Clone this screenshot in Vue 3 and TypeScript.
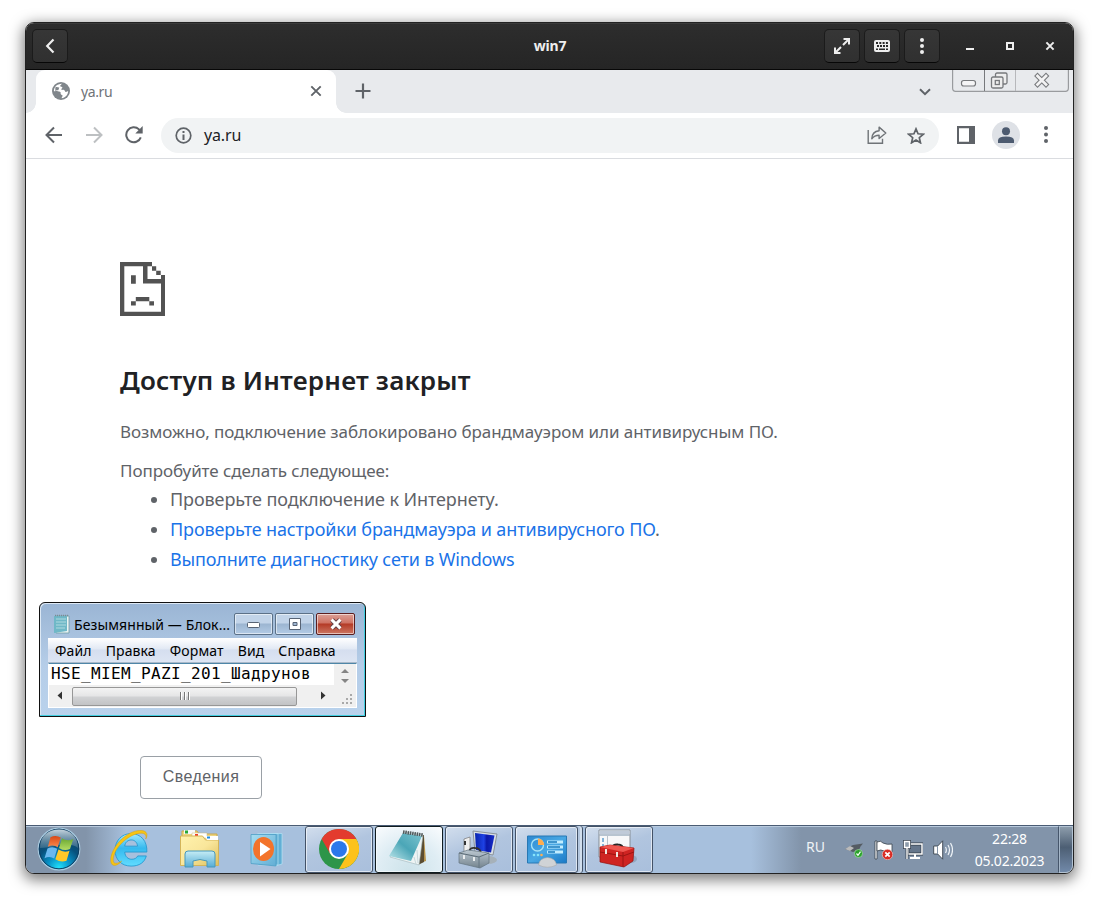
<script setup lang="ts">
interface Hint { text: string; link: boolean; tail: string; cls: string }
const hints: Hint[] = [
  { text: 'Проверьте подключение к Интернету.', link: false, tail: '', cls: 'h1' },
  { text: 'Проверьте настройки брандмауэра и антивирусного ПО', link: true, tail: '.', cls: 'h2' },
  { text: 'Выполните диагностику сети в Windows', link: true, tail: '', cls: 'h3' },
]
const menu: string[] = ['Файл', 'Правка', 'Формат', 'Вид', 'Справка']
</script>

<template>
  <div class="desktop">
    <div class="window">
      <header class="titlebar">
        <button class="gbtn" aria-label="Назад">
          <svg width="16" height="16" viewBox="0 0 16 16"><path d="M11.500 1.500 5.200 8l6.300 6.500" fill="none" stroke="#eee" stroke-width="2.200" /></svg>
        </button>
        <div class="title">win7</div>
        <div class="controls">
          <button class="gbtn"><svg width="16" height="16" viewBox="0 0 16 16"><g fill="none" stroke="#eee" stroke-width="2"><path d="M9.500 1H15v5.500M14.500 1.500 9 7M1 9.500V15h5.500M1.500 14.500 7 9" /></g></svg></button>
          <button class="gbtn"><svg width="16" height="16" viewBox="0 0 16 16"><rect y="2" width="16" height="12" rx="2" fill="#eee" /><path d="M2 5h12" stroke="#292929" stroke-width="2" stroke-dasharray="2 1.300" /><path d="M3 8h11" stroke="#292929" stroke-width="1.800" stroke-dasharray="2 1" /><path d="M2 11.200h2M5 11.200h6M12 11.200h2" stroke="#292929" stroke-width="1.600" /></svg></button>
          <button class="gbtn"><svg width="16" height="16" viewBox="0 0 16 16" fill="#eee"><circle cx="8" cy="2" r="2" /><circle cx="8" cy="8" r="2" /><circle cx="8" cy="14" r="2" /></svg></button>
          <div class="winctl first"><svg width="16" height="16" viewBox="0 0 16 16"><path d="M4 11h8" stroke="#eee" stroke-width="2" /></svg></div>
          <div class="winctl"><svg width="16" height="16" viewBox="0 0 16 16"><path d="M5 5h6v6H5z" fill="none" stroke="#eee" stroke-width="2" /></svg></div>
          <div class="winctl"><svg width="16" height="16" viewBox="0 0 16 16"><path d="m4.400 4.400 7.200 7.200m0-7.200-7.200 7.200" stroke="#eee" stroke-width="2" /></svg></div>
        </div>
      </header>

      <div class="tabstrip">
        <div class="tab">
          <svg width="18" height="18" viewBox="0 0 18 18"><circle cx="9" cy="9" r="9" fill="#80868b" /><path d="M10.200 1.800c-.9.6-2.200 1.600-2 2.500.4.7 2 .4 2.200 1.300.1.900-1.100 1-1.200 1.900.2.700 2.100.1 2.900.6.900.5.700 1.800 1.800 1.900.7.100 1.400-.7 2.300-.7-.2 3.500-3 6.600-6.500 6.900-.1-.9.5-1.600 1-2.300-.2-1-1.700-1-2-1.900-.2-.8.2-1.400-.3-2C7.200 9.200 4 9.500 1.900 9.300c-.1-4 3-7.700 8.300-7.500z" fill="#fff" /><path d="M3.300 5.500C5 4.500 6 5.700 7.300 5.500l-1 2.700H3.600l2.600 1.900-.2 3-2.600-1z" fill="#80868b" /></svg>
          <span class="tabname">ya.ru</span>
          <svg class="x" width="12" height="12" viewBox="0 0 12 12"><path d="m1.300 1.300 9.400 9.400m0-9.400-9.400 9.400" stroke="#5f6368" stroke-width="1.900" /></svg>
        </div>
        <svg class="plus" width="16" height="16" viewBox="0 0 16 16"><path d="M8 .500v15M.500 8h15" stroke="#5f6368" stroke-width="2.200" /></svg>
        <svg class="chev" width="12" height="8" viewBox="0 0 12 8"><path d="m1 1.200 5 5 5-5" fill="none" stroke="#5f6368" stroke-width="2" /></svg>
        <svg class="aero" width="118" height="23" viewBox="0 0 118 23"><g fill="none" stroke="#999b9e"><path d="M.6 0v18q0 3.400 3 3.400h109.800q3 0 3-3.400V0" stroke-width="1.200" /><path d="M32.500 0v21" stroke="#77797c" /><path d="M63.500 0v21" stroke="#b7b8bb" /><rect x="9.500" y="10.500" width="14" height="5.500" rx="2.200" fill="#f5f5f6" stroke="#77797c" stroke-width="1.200" /><g stroke="#77797c" stroke-width="1.300"><rect x="43.500" y="3" width="11.500" height="11" rx="1.500" fill="#eee" /><rect x="39.500" y="7" width="11.500" height="11" rx="1.500" fill="#eee" /><rect x="43.300" y="10.500" width="4" height="4" /></g></g><path d="m85.500 6 8.500 8.500m0-8.500-8.500 8.500" stroke="#77797c" stroke-width="4.800" stroke-linecap="square" /><path d="m85.500 6 8.500 8.500m0-8.500-8.500 8.500" stroke="#f3f3f4" stroke-width="2.700" stroke-linecap="square" /></svg>
      </div>

      <div class="toolbar">
        <svg class="t1" width="18" height="18" viewBox="0 0 18 18"><path d="M17 9H2M9 1.500 1.500 9 9 16.500" fill="none" stroke="#5f6368" stroke-width="2" /></svg>
        <svg class="t2" width="18" height="18" viewBox="0 0 18 18"><path d="M1 9h15M9 1.500 16.500 9 9 16.500" fill="none" stroke="#bdc0c2" stroke-width="2" /></svg>
        <svg class="t3" width="18" height="18" viewBox="0 0 18 18"><path d="M15.800 11.400A7.500 7.500 0 1 1 14 3.400l2 2.300" fill="none" stroke="#5f6368" stroke-width="2" /><path d="M17.700 0v7.400h-7.400z" fill="#5f6368" /></svg>
        <div class="omnibox">
          <svg width="17" height="17" viewBox="0 0 17 17"><circle cx="8.500" cy="8.500" r="7.300" fill="none" stroke="#5f6368" stroke-width="1.700" /><path d="M8.500 7.400V13M8.500 4v2" stroke="#5f6368" stroke-width="2" /></svg>
          <span class="url">ya.ru</span>
          <svg class="share" width="20" height="18" viewBox="0 0 20 18"><g fill="none" stroke="#6f7377" stroke-width="1.400"><path d="M1.200 4v13.200h14.300v-4.400" /><path d="M4.800 12.800c.2-5 3-7.600 7.300-8V1.100L18.800 7l-6.700 5.500V9.200c-3 0-5.400 1-7.300 3.600z" stroke-linejoin="round" /></g></svg>
          <svg width="18" height="17" viewBox="0 0 18 17"><path d="m9 1.900 2.050 4.900 5.250.45-4 3.450 1.200 5.150L9 13.100l-4.500 2.750 1.200-5.150-4-3.450 5.250-.45z" fill="none" stroke="#5f6368" stroke-width="1.700" /></svg>
        </div>
        <svg class="panel" width="18" height="18" viewBox="0 0 18 18"><path d="M0 0h18v18H0z" fill="#5f6368" /><path d="M2 2.200h10v13.600H2z" fill="#fff" /></svg>
        <svg class="avatar" width="28" height="28" viewBox="0 0 28 28"><circle cx="14" cy="14" r="14" fill="#dee1e6" /><circle cx="14" cy="10.300" r="4" fill="#4d5b70" /><path d="M6 22v-2.600q0-4 8-4t8 4V22z" fill="#4d5b70" /></svg>
        <svg class="dots" width="4" height="18" viewBox="0 0 4 18" fill="#5f6368"><circle cx="2" cy="2" r="2" /><circle cx="2" cy="8.500" r="2" /><circle cx="2" cy="15" r="2" /></svg>
      </div>

      <main class="page">
        <svg class="sad" width="45" height="54" viewBox="0 0 45 54" fill="#535353"><path fill-rule="evenodd" d="M0 0h32v4.300H27.500V17H41v-4h4v41H0zM4.300 4.300v45.400H41V21.500H23V4.300z" /><path d="M32 4.300h4.200v4.500H32zM36.200 8.800h4.500V13h-4.500zM11 13.300h4.800v8.400H11zM15.800 35h13.500v4.300H15.800zM11 39.300h4.800v4.200H11zM29.300 39.300H34v4.200h-4.700z" /></svg>
        <h1><span>Доступ в Интернет закрыт</span></h1>
        <p class="p1"><span>Возможно, подключение заблокировано брандмауэром или антивирусным ПО.</span></p>
        <p class="p2"><span>Попробуйте сделать следующее:</span></p>
        <ul>
          <li v-for="h in hints" :key="h.text" :class="h.cls"><span :class="{ link: h.link }">{{ h.text }}</span>{{ h.tail }}</li>
        </ul>
        <button class="details">Сведения</button>
      </main>

      <footer class="taskbar">
        <div class="launch">
          <svg class="start" width="44" height="44" viewBox="0 0 44 44">
            <defs>
              <radialGradient id="orb" cx=".5" cy=".95" r=".9"><stop offset="0" stop-color="#22e2fb" /><stop offset=".3" stop-color="#0793c8" /><stop offset=".6" stop-color="#07517d" /><stop offset="1" stop-color="#174360" /></radialGradient>
              <linearGradient id="gloss" x2="0" y2="1"><stop stop-color="#e3edf4" stop-opacity=".85" /><stop offset="1" stop-color="#7c9cb0" stop-opacity=".35" /></linearGradient>
              <linearGradient id="wr" x2="0" y2="1"><stop stop-color="#d94715" /><stop offset="1" stop-color="#f98a4e" /></linearGradient>
              <linearGradient id="wg" x2="0" y2="1"><stop stop-color="#6aa833" /><stop offset="1" stop-color="#b4dc63" /></linearGradient>
            </defs>
            <circle cx="22" cy="22" r="20.800" fill="url(#orb)" stroke="#a9cbe0" stroke-width="1.200" /><circle cx="22" cy="22" r="19.800" fill="none" stroke="#103e62" />
            <path d="M3 21C3 9 11 2.500 22 2.500S41 9 41 21q-5-5-19-3-11 3-19 3z" fill="url(#gloss)" />
            <path d="M13.500 10.200q5.500-2.800 10.200.4l-3 9.600q-4.600-3-9.800-.4z" fill="url(#wr)" /><path d="M25 11.300q5 3.500 11.300.8l-3.300 10q-5.600 2.500-11-1.200z" fill="url(#wg)" /><path d="M10.500 21.600q5-2.700 9.700.2l-3 9.600q-4.600-2.900-9.700-.2z" fill="#6ab8ef" /><path d="M21.500 22.600q5.400 3.500 11 1.200l-3 10q-5.500 2.200-11.200-1.500z" fill="#ffc829" />
          </svg>
          <svg class="ie" width="38" height="38" viewBox="0 0 40 40">
            <defs><linearGradient id="ieg" x2="0" y2="1"><stop stop-color="#a2e9ff" /><stop offset=".45" stop-color="#35b9ee" /><stop offset="1" stop-color="#61dcff" /></linearGradient></defs>
            <path d="M38.800 23.200H15.500c.4 5 3.500 7.600 7.500 7.600 3 0 5-1.200 6.200-3.500h9C36.500 34 31 38 22.200 38 12 38 5.300 31 5.300 21.300S12 3.800 22 3.800c10.500 0 17.400 7.800 16.800 19.400zM29 17c-.5-4.200-3-6.500-6.700-6.500-3.500 0-6.200 2.300-6.800 6.500z" fill="url(#ieg)" stroke="#2596cf" stroke-width=".9" />
            <path d="M37.600 9.500c1-3.500-.4-5.900-4-6.100C22 2.500 3.500 18 3.300 31.500c0 4.500 4 4.500 9 1.300C6 39.500.300 38.500.8 31 1.800 16 19.500-.800 33.500.5c5.800.6 6.500 5 4.100 9z" fill="#f7c514" stroke="#d89d09" stroke-width=".5" />
          </svg>
          <svg class="folder" width="42" height="42" viewBox="0 0 42 42">
            <defs><linearGradient id="fg" x2="1" y2="1"><stop stop-color="#fff2ad" /><stop offset=".5" stop-color="#f9e69b" /><stop offset="1" stop-color="#dfc05c" /></linearGradient><linearGradient id="fb" x2="0" y2="1"><stop stop-color="#c6edf5" /><stop offset="1" stop-color="#55acd5" /></linearGradient></defs>
            <path d="M3 3h15l2 3h18v8H3z" fill="#eed580" stroke="#cba94d" /><path d="M5 2h11v4H5z" fill="#f8f8f8" /><path d="M6 2.500h3v3H6z" fill="#27a737" /><path d="M13 5h15v5H13z" fill="#fff" stroke="#c9b678" stroke-width=".5" /><path d="M16 6h3v2h-3z" fill="#f23c27" /><path d="M1.500 8h22l3 4h13v25.500h-38z" fill="url(#fg)" stroke="#d3b45a" /><path d="M26 8h13v4H28z" fill="#fff" /><path d="M28 8.500h3v2h-3z" fill="#218ce0" />
            <path d="M6 39V26q0-3 3-3h24q3 0 3 3v13h-8v-6q-7-3-14 0v6z" fill="url(#fb)" stroke="#4798bd" />
          </svg>
          <svg class="wmp" width="36" height="36" viewBox="0 0 36 36"><defs><linearGradient id="mg" x2="1" y2="1"><stop stop-color="#a7ddf1" /><stop offset="1" stop-color="#62aed5" /></linearGradient></defs><path d="m8 2 24-.5V32l-7 2zM7 2l21-.5V33H8z" fill="#62afd5" stroke="#b8e4f5" stroke-width=".7" /><path d="M1 2.500h25V34L1 31.500z" fill="url(#mg)" stroke="#4e9ec5" stroke-width=".8" /><ellipse cx="13.500" cy="17" rx="10.500" ry="12" fill="#f3742b" /><path d="m10 10 10.500 7L10 24.500z" fill="#fff" /></svg>
        </div>
        <div class="task chrome">
          <svg width="40" height="40" viewBox="0 0 48 48"><circle cx="24" cy="24" r="24" fill="#2d9549" /><path d="M24 12h20.800A24 24 0 0 1 24 48l10.400-18z" fill="#fcc21b" /><path d="M3.200 12A24 24 0 0 1 44.800 12H24L13.600 30z" fill="#e33b2e" /><circle cx="24" cy="24" r="12" fill="#fff" /><circle cx="24" cy="24" r="9.600" fill="#2b78ea" /></svg>
        </div>
        <div class="task active">
          <svg width="42" height="38" viewBox="0 0 42 38"><defs><linearGradient id="ng" x1="1" x2="0" y2="1"><stop stop-color="#7cc4cf" /><stop offset=".5" stop-color="#4ba6b7" /><stop offset="1" stop-color="#c2e8ec" /></linearGradient></defs><path d="m36 6 2 25-6 2z" fill="#b6924a" /><path d="m34 5-4 30 6-3V5z" fill="#5a4c31" /><path d="m16 2 19 3-4 30L2 27z" fill="#eef4f4" stroke="#9fb6bb" stroke-width=".6" /><path d="m15 3 19 3-11 25-22-5z" fill="url(#ng)" /><path d="m15 2 20 3" stroke="#50595a" stroke-width="3.500" stroke-dasharray="1.500 .8" /><path d="m26 27 2 7m1-14 1 13" stroke="#b8cdd1" stroke-width=".7" /></svg>
        </div>
        <div class="task">
          <svg width="42" height="42" viewBox="0 0 42 42"><defs><linearGradient id="scr" x2="1"><stop stop-color="#0824ae" /><stop offset=".45" stop-color="#1e42e5" /><stop offset=".6" stop-color="#0a18a8" /><stop offset="1" stop-color="#182fc8" /></linearGradient><linearGradient id="steel" x2="0" y2="1"><stop stop-color="#bcc8d1" /><stop offset="1" stop-color="#74848f" /></linearGradient></defs><path d="m6 10 6-2v17l-6-2z" fill="#eee" stroke="#777" stroke-width=".7" /><path d="M7 12v4" stroke="#333" stroke-width="2" /><path d="m15 2 24 3-4 21-18-3z" fill="#d8dfe5" stroke="#89929a" /><path d="m17 4 19.500 2.500L33 23.500 18 21z" fill="url(#scr)" /><ellipse cx="30" cy="31" rx="9" ry="4" fill="#a6b1b9" /><path d="M11 23q1-5 6-4 5 0 6 5" fill="none" stroke="#333" stroke-width="1.800" /><path d="m1 24 9-3 21 3v10l-9 5-21-5z" fill="url(#steel)" stroke="#647681" stroke-width=".7" /><path d="m1 24 20 4 10-4" fill="none" stroke="#5c6c77" /><path d="M21 28v11" stroke="#657784" /><path d="M6 26v4M16 28v4" stroke="#e9edef" stroke-width="2" /></svg>
        </div>
        <div class="task stack">
          <svg width="42" height="42" viewBox="0 0 42 42"><defs><linearGradient id="cp" x2="1" y2="1"><stop stop-color="#2c88d1" /><stop offset=".5" stop-color="#49a8e4" /><stop offset="1" stop-color="#1979c7" /></linearGradient></defs><path d="M1.500 7h39v27h-39z" fill="url(#cp)" stroke="#2878b4" /><circle cx="11.500" cy="16" r="6" fill="none" stroke="#a7e2f7" stroke-width="1.400" /><path d="M12 16V9.500a6 6 0 0 1 6 6.500z" fill="#ffad50" /><path d="M21 13h16M21 18h16M21 23h16" stroke="#c2edff" stroke-width="3" /><path d="M22 13h9M22 18h12M22 23h7" stroke="#167abd" stroke-width="1.500" /><circle cx="8" cy="26" r="1.300" fill="#87e4fa" /><circle cx="12" cy="26" r="1.300" fill="#87e4fa" /><circle cx="15.500" cy="26" r="1.300" fill="#ffad50" /><path d="M12.500 36q1-7 9-7.500 8 .5 9 7.500-9 4.500-18 0z" fill="#d0d3d6" stroke="#aaa" stroke-width=".6" /></svg>
        </div>
        <div class="task last">
          <svg width="42" height="42" viewBox="0 0 42 42"><path d="M4 2h31v27H4z" fill="#f7f8f9" stroke="#858d95" /><path d="M4.500 2.500h30V6h-30z" fill="#bfcad8" /><path d="M4.500 7h30" stroke="#7890a7" /><path d="M12.500 8v20" stroke="#bac3cb" /><path d="M7 10h2v4H7zM7 16h2v3H7z" fill="#84b4d7" /><ellipse cx="36" cy="31" rx="6" ry="4" fill="#6b8095" opacity=".4" /><path d="M17 20q1-4 6-3.500 5 0 5 5" fill="none" stroke="#272727" stroke-width="2" /><path d="m5 19 10-2 24 3-1 13-9 6-24-5z" fill="#cf2422" stroke="#92100d" stroke-width=".7" /><path d="m5 19 23 5 11-4-24-3z" fill="#ef5750" /><path d="M28 24v15M5 24l23 4 11-4" stroke="#9b1512" fill="none" /><path d="M11 21v5M22 24v5" stroke="#efe7e0" stroke-width="2" /></svg>
        </div>
        <div class="tray">
          <span class="lang">RU</span>
          <svg class="usb" width="19" height="17" viewBox="0 0 19 17"><path d="m1 8 8-4 10-1.500-2.500 3L15 9l-6 2z" fill="#555c63" /><path d="m1 8 5-3 4 2-4 3z" fill="#bbb" /><circle cx="14.500" cy="12.500" r="4" fill="#2aa22b" stroke="#b7e0b7" stroke-width=".6" /><path d="m12.500 12.500 1.500 1.800 2.500-3.600" stroke="#fff" fill="none" stroke-width="1.200" /></svg>
          <svg class="flag" width="19" height="20" viewBox="0 0 19 20"><path d="M1 1h2v18H1z" fill="#fff" stroke="#39434d" stroke-width=".8" /><path d="M3 2q4-2 6 1 4 2 9 1v8q-5 1-8-1-3-2-7 0z" fill="#fff" stroke="#39434d" stroke-width=".8" /><circle cx="13.500" cy="14.500" r="5.200" fill="#d92b23" stroke="#eed0cc" stroke-width=".6" /><path d="m11.300 12.300 4.400 4.400m0-4.400-4.400 4.400" stroke="#fff" stroke-width="1.700" /></svg>
          <svg class="net" width="20" height="20" viewBox="0 0 20 20"><path d="M5 4h14v10H5z" fill="#65768b" stroke="#333d49" stroke-width="2.800" /><path d="M5 4h14v10H5z" fill="none" stroke="#fff" stroke-width="1.500" /><path d="M12 14v4M7 18h10" stroke="#fff" stroke-width="2" /><path d="M1.500 1.500h5v6h-5zM4 8v11" fill="#8d9baa" stroke="#333d49" stroke-width="2.800" /><path d="M1.500 1.500h5v6h-5zM4 8v11" fill="#8d9baa" stroke="#fff" stroke-width="1.400" /></svg>
          <svg class="snd" width="20" height="20" viewBox="0 0 20 20"><path d="M.7 6h4l5-5.200v18.400L4.700 14h-4z" fill="#fff" stroke="#39434d" stroke-width=".9" /><path d="M4.500 6v8" stroke="#8595a8" /><path d="M12.500 7q1.700 3 0 6M15 5q3 5 0 10M17.500 3q4 7 0 14" fill="none" stroke="#eef3f7" stroke-width="1.200" /></svg>
          <div class="clock"><span class="time">22:28</span><span>05.02.2023</span></div>
          <div class="peek"></div>
        </div>
      </footer>

      <section class="notepad">
        <div class="np-title">
          <svg width="18" height="21" viewBox="0 0 18 21"><path d="M3 2h14v17H4z" fill="#eaf4f4" stroke="#709da5" stroke-width=".8" /><path d="M2 2h13v15l-13 2z" fill="#6fb8c7" /><path d="M4 5h10M4 8h10M4 11h10M4 14h9" stroke="#c0e3e7" stroke-width=".8" /><path d="M3 1.500h13" stroke="#7b8b92" stroke-width="1.500" stroke-dasharray="1 1" /></svg>
          <span class="np-name">Безымянный — Блок...</span>
          <div class="np-btns">
            <i><svg width="15" height="9" viewBox="0 0 15 9"><rect x="1.500" y="2.500" width="12" height="5" rx="1" fill="#fff" stroke="#576374" /></svg></i>
            <i><svg width="14" height="12" viewBox="0 0 14 12"><path d="M1.500 .5h11v11h-11z" fill="#fff" stroke="#576374" /><path d="M5 4.500h4v3H5z" fill="#9fb7d3" stroke="#576374" /></svg></i>
            <i class="red"><svg width="14" height="12" viewBox="0 0 14 12"><path d="m3 2 8 8m0-8-8 8" stroke="#64424a" stroke-width="5" /><path d="m2.600 1.600 8.800 8.800m0-8.800-8.800 8.800" stroke="#fff" stroke-width="3" /></svg></i>
          </div>
        </div>
        <nav><span v-for="m in menu" :key="m">{{ m }}</span></nav>
        <div class="np-body">
          <div class="np-text"><span>HSE_MIEM_PAZI_201_Шадрунов</span><svg class="vs" width="22" height="23" viewBox="0 0 22 23"><path fill="#858585" d="m7 9 4-4 4 4zM7 15h8l-4 4z" /></svg></div>
          <div class="np-scroll">
            <svg width="23" height="20" viewBox="0 0 23 20"><path fill="#333" d="M13 5.500v8L8.500 9.500z" /></svg>
            <div class="thumb"><b></b><b></b><b></b></div>
            <svg width="37" height="20" viewBox="0 0 37 20"><path fill="#333" d="M24 5.500v8l4.500-4z" /></svg>
            <svg class="grip" width="22" height="20" viewBox="0 0 22 20" fill="#a9a9a9"><path d="M16 8h2v2h-2zM16 12h2v2h-2zM16 16h2v2h-2zM12 12h2v2h-2zM12 16h2v2h-2zM8 16h2v2H8z" /></svg>
          </div>
        </div>
      </section>
    </div>
  </div>
</template>

<style>
html, body { margin: 0; background: #fff; }
</style>

<style scoped>
* { box-sizing: border-box; }
svg { display: block; flex: none; }
span { white-space: nowrap; }
.desktop { width: 1099px; height: 902px; padding: 22px 25px; overflow: hidden; background: #fff; font-family: "Noto Sans", "Open Sans", sans-serif; }
.window { position: relative; width: 1049px; height: 852px; border: 1px solid #222; border-radius: 9px; overflow: hidden; display: flex; flex-direction: column; background: #fff; box-shadow: 0 4px 14px 2px rgba(0,0,0,.5); }
.titlebar { height: 47px; flex: none; background: linear-gradient(#2d2d2d, #252525); border-top: 1px solid #3b3b3b; border-bottom: 1px solid #070707; display: flex; align-items: center; padding: 0 5px 1px 6px; }
.gbtn { width: 36px; height: 34px; padding: 0; border: 1px solid #1b1b1b; border-bottom-color: #070707; border-radius: 5px; background: linear-gradient(#363636, #303030); display: flex; align-items: center; justify-content: center; }
.title { flex: 1; padding-left: 208px; text-align: center; color: #eee; font: 700 14px/20px "Noto Sans", sans-serif; letter-spacing: -.2px; }
.controls { display: flex; gap: 4px; align-items: center; }
.winctl { width: 36px; display: flex; justify-content: center; }
.first { margin-left: 8px; }
.tabstrip { height: 43px; flex: none; background: #e8eaed; display: flex; }
.tab { width: 300px; height: 43px; margin-left: 10px; background: #fff; border-radius: 9px 9px 0 0; display: flex; align-items: center; padding: 0 14px 1px 16px; position: relative; }
.tab::before, .tab::after { content: ""; position: absolute; bottom: 0; width: 10px; height: 10px; }
.tab::before { left: -10px; background: radial-gradient(circle at 0 0, transparent 9.500px, #fff 10px); }
.tab::after { right: -10px; background: radial-gradient(circle at 100% 0, transparent 9.500px, #fff 10px); }
.tabname { margin-left: 11px; color: #6f7378; font-size: 14px; letter-spacing: -.4px; }
.x { margin-left: auto; }
.plus { margin: 13px 0 0 19px; }
.chev { margin: 18px 0 0 auto; }
.aero { margin: 0 3px 0 21px; }
.toolbar { height: 46px; flex: none; border-bottom: 1px solid #dadce0; display: flex; align-items: center; padding: 0 25px 2px 19px; }
.t2, .t3 { margin-left: 22px; }
.omnibox { margin: 1px 0 0 18px; width: 778px; height: 35px; border-radius: 18px; background: #f1f3f4; display: flex; align-items: center; padding: 0 14px; }
.url { color: #202124; font-size: 16px; margin-left: 12px; letter-spacing: -.15px; }
.share { margin: 0 20px 0 auto; }
.panel { margin-left: 18px; }
.avatar { margin-left: 17px; }
.dots { margin-left: auto; }
.page { flex: 1; padding: 103px 0 0 94px; display: flex; flex-direction: column; align-items: flex-start; color: #5f6368; }
h1 { margin: 46px 0 0; font: 600 26px/36px "Noto Sans", sans-serif; letter-spacing: .2px; color: #202124; }
p { margin: 0; font-size: 17px; line-height: 28px; letter-spacing: -.065px; }
.p1 { margin-top: 20px; }
.p2 { margin-top: 11px; }
ul { margin: -1px 0 0; padding: 0 0 0 50px; font-size: 18px; line-height: 30px; }
.h1 { letter-spacing: -.09px; }
.h2 { letter-spacing: -.13px; }
.h3 { letter-spacing: -.17px; }
.link { color: #1a73e8; }
.details { margin: 182px 0 0 20px; width: 122px; height: 43px; border: 1px solid #9aa0a6; border-radius: 4px; background: #fff; color: #5f6368; font: 16px "Liberation Sans", Arial, sans-serif; letter-spacing: .45px; padding: 0 0 1px; }
.taskbar { height: 48px; flex: none; border-top: 1px solid #4a5c74; box-shadow: inset 0 1px #b9cadd; background: linear-gradient(90deg, #8294aa 0, #8294aa 60px, #a7c0dd 100px, #a7c0dd 725px, #8294aa 775px); display: flex; }
.launch { width: 279px; display: flex; align-items: center; padding-bottom: 2px; }
.start { margin-left: 11px; }
.ie { margin-left: 29px; }
.folder { margin-left: 31px; }
.wmp { margin: 2px 0 0 29px; }
.task { width: 68px; height: 47px; margin-right: 2px; border: 1px solid #435267; border-radius: 3px; box-shadow: inset 0 0 0 1px rgba(255,255,255,.6); background: linear-gradient(160deg, #d2deed, #b1c5df 45%, #a9bfdc); display: flex; align-items: center; justify-content: center; flex: none; }
.chrome { padding-bottom: 2px; }
.active { background: radial-gradient(circle at 50% 100%, #cde3ea, #dfedf4 55%, #fafcfe); border-color: #101c20; padding-bottom: 2px; }
.stack { width: 63px; margin-right: 7px; box-shadow: inset 0 0 0 1px rgba(255,255,255,.6), 2px 0 #b3c6de, 4px 0 #d2dfed, 5px 0 #435267; }
.last { padding: 0 7px 1px 0; }
.tray { flex: 1; display: flex; align-items: center; color: #fff; }
.lang { margin-left: 151px; font-size: 14px; width: 39px; line-height: 20px; margin-top: -5px; color: #eef2f6; }
.usb { margin-left: -1px; }
.flag { margin-left: 11px; }
.net { margin-left: 10px; }
.snd { margin-left: 10px; }
.clock { margin-left: 20px; width: 73px; display: flex; flex-direction: column; align-items: center; font-size: 14px; line-height: 22px; letter-spacing: -.2px; }
.peek { margin-left: auto; width: 15px; height: 47px; border: 1px solid #b3c3d3; border-left-color: #46566b; box-shadow: inset 1px 0 #a5b6c8; background: linear-gradient(#8c9cab, #4d5f74 45%, #7189a9); border-radius: 0 0 7px 0; }
.notepad { position: absolute; left: 13px; top: 579px; width: 327px; height: 115px; border: 1px solid #111; border-radius: 6px 6px 0 0; background: linear-gradient(#9ab5d4, #b5cde8 55%, #b9d2ec); box-shadow: inset -1px -1px #41cfe1, inset 1px 1px #dce8f4; padding: 8px 8px 8px 8px; color: #000; overflow: hidden; }
.np-title { height: 27px; display: flex; align-items: center; padding-left: 4px; }
.np-name { font-size: 14px; margin-left: 4px; letter-spacing: .1px; }
.np-btns { margin-left: auto; margin-right: 2px; display: flex; gap: 2px; align-self: flex-start; margin-top: 2px; }
.np-btns i { width: 39px; height: 22px; border: 1px solid #5c7188; border-radius: 2px; box-shadow: inset 0 0 0 1px rgba(255,255,255,.55); background: linear-gradient(#c2d4e9 45%, #9cb5d1 50%, #b3cbe5); display: flex; align-items: center; justify-content: center; }
.np-btns .red { border-color: #5b1e20; background: linear-gradient(#dba097, #cf7263 45%, #b43a26 50%, #cc7763); }
nav { height: 25px; display: flex; gap: 14px; padding-left: 7px; font-size: 14px; line-height: 25px; letter-spacing: .12px; background: linear-gradient(#fff, #e2e9f4 45%, #d5deef 50%, #dde5f3); border-bottom: 1px solid #a9b9c9; }
.np-body { background: #fff; height: 45px; border: 1px solid #67839d; border-color: #4e86a8 #fff #fff; }
.np-text { height: 21px; display: flex; justify-content: space-between; font: 16px/19px "DejaVu Sans Mono", monospace; letter-spacing: .37px; padding-left: 2px; overflow: hidden; }
.vs { background: #f0f0f0; }
.np-scroll { height: 22px; background: #f0f0f0; display: flex; align-items: center; }
.thumb { flex: 1; height: 19px; border: 1px solid #979797; border-radius: 2px; background: linear-gradient(#f3f3f3, #e5e5e6 48%, #d1d2d4 52%, #c2c3c5); display: flex; align-items: center; justify-content: center; gap: 2px; }
.thumb b { width: 2px; height: 8px; background: #777; border-right: 1px solid #fff; }
</style>
